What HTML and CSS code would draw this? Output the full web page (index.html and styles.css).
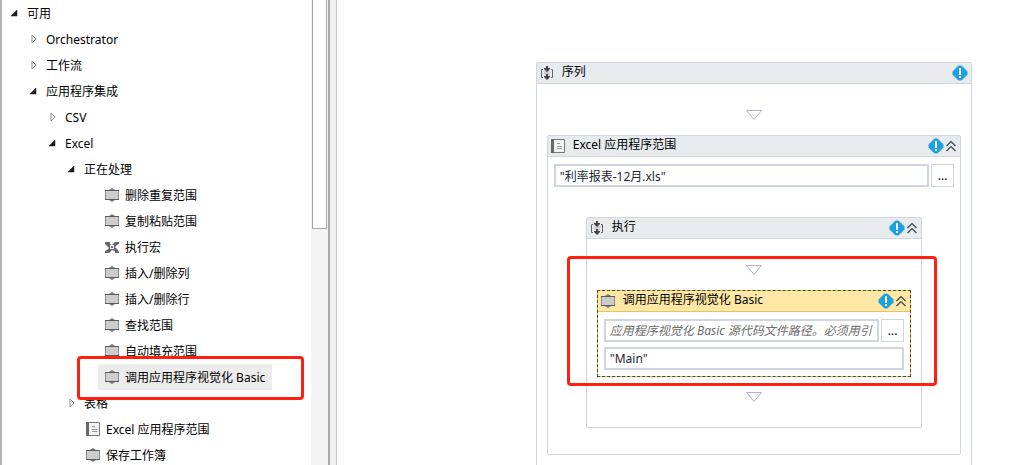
FILE: index.html
```html
<!DOCTYPE html>
<html lang="zh-CN">
<head>
  <meta charset="UTF-8" />
  <meta name="viewport" content="width=device-width, initial-scale=1.0" />
  <title>Excel</title>
  <link rel="stylesheet" href="styles.css">
</head>
<body>
  <svg class="sprite" aria-hidden="true">
    <symbol id="i-open" viewBox="0 0 8 8"><path d="M7 1v6H1z" fill="#1e1e1e" stroke="#1e1e1e" stroke-width=".5"/></symbol>
    <symbol id="i-closed" viewBox="0 0 6 10"><path d="M1 1l4 4-4 4z" fill="#fff" stroke="#8c8c8c"/></symbol>
    <symbol id="i-activity" viewBox="0 0 16 16">
      <path d="M8 1l3 2H5zM8 15l3-2H5z" fill="#777"/>
      <path d="M2 4h12v8H2z" fill="#cdcdcd"/>
      <path d="M1 3.500h14M1 12.500h14" stroke="#5c5c5c"/>
      <path d="M1.500 4v8M14.500 4v8" stroke="#8a8a8a"/>
    </symbol>
    <symbol id="i-macro" viewBox="0 0 16 16">
      <path d="M1 3h5v2l2 1 3-3h4v2l-2 1-2 2 2 2 2 3v1h-4v-2l-3-1-3 3H1v-2l2-1 2-2-2-2-2-2z" fill="#666"/>
      <path d="M6 6h4v4H6z" fill="#eee"/><path d="M7 7h2v2H7z" fill="#777"/>
    </symbol>
    <symbol id="i-book" viewBox="0 0 14 16">
      <path d="M.5 1.500h13v13H.5z" fill="#f2f2f2" stroke="#777"/>
      <path d="M0 1h3v14H0z" fill="#686868"/>
      <path d="M6 5.500h3M6 8.500h5M6 10.500h5" stroke="#999"/>
    </symbol>
    <symbol id="i-sequence" viewBox="0 0 14 16">
      <path d="M4 6h6v4H4z" fill="#cfcfcf"/>
      <path d="M3 4.500H1.500v8H3M11 4.500h1.500v8H11" fill="none" stroke="#666"/>
      <path d="M6 1h2v2h2v1L7 7 4 4V3h2zM6 9h2v2h2v1l-3 3-3-3v-1h2z" fill="#444"/>
    </symbol>
    <symbol id="i-alert" viewBox="0 0 16 16">
      <path d="M6.500 1h3L15 6.500v3L9.500 15h-3L1 9.500v-3z" fill="#1ba1e2" stroke="#1ba1e2"/>
      <path d="M7 3h2v7H7zM7 11h2v2H7z" fill="#fff"/>
    </symbol>
    <symbol id="i-up" viewBox="0 0 12 12"><path d="M1.500 6L6 1.500 10.500 6M1.500 11L6 6.500 10.500 11" fill="none" stroke="#39424f" stroke-width="1.200"/></symbol>
    <symbol id="i-drop" viewBox="0 0 18 11"><path d="M1.500.5h15L9 9.500z" fill="#fff" stroke="#adb5c7"/></symbol>
  </svg>

  <div class="app">
    <aside class="panel">
      <ul class="tree">
        <li>
          <div class="row"><button class="toggle" aria-label="可用"><svg class="open"><use href="#i-open"/></svg></button>可用</div>
          <ul>
            <li><div class="row"><button class="toggle" aria-label="Orchestrator"><svg class="closed"><use href="#i-closed"/></svg></button>Orchestrator</div></li>
            <li><div class="row"><button class="toggle" aria-label="工作流"><svg class="closed"><use href="#i-closed"/></svg></button>工作流</div></li>
            <li>
              <div class="row"><button class="toggle" aria-label="应用程序集成"><svg class="open"><use href="#i-open"/></svg></button>应用程序集成</div>
              <ul>
                <li><div class="row"><button class="toggle" aria-label="CSV"><svg class="closed"><use href="#i-closed"/></svg></button>CSV</div></li>
                <li>
                  <div class="row"><button class="toggle" aria-label="Excel"><svg class="open"><use href="#i-open"/></svg></button>Excel</div>
                  <ul>
                    <li>
                      <div class="row"><button class="toggle" aria-label="正在处理"><svg class="open"><use href="#i-open"/></svg></button>正在处理</div>
                      <ul>
                        <li class="leaf"><div class="item"><svg class="icon"><use href="#i-activity"/></svg>删除重复范围</div></li>
                        <li class="leaf"><div class="item"><svg class="icon"><use href="#i-activity"/></svg>复制粘贴范围</div></li>
                        <li class="leaf"><div class="item"><svg class="icon"><use href="#i-macro"/></svg>执行宏</div></li>
                        <li class="leaf"><div class="item"><svg class="icon"><use href="#i-activity"/></svg>插入/删除列</div></li>
                        <li class="leaf"><div class="item"><svg class="icon"><use href="#i-activity"/></svg>插入/删除行</div></li>
                        <li class="leaf"><div class="item"><svg class="icon"><use href="#i-activity"/></svg>查找范围</div></li>
                        <li class="leaf"><div class="item"><svg class="icon"><use href="#i-activity"/></svg>自动填充范围</div></li>
                        <li class="leaf"><div class="item selected"><svg class="icon"><use href="#i-activity"/></svg>调用应用程序视觉化 Basic<span class="mark mark-item"></span></div></li>
                      </ul>
                    </li>
                    <li><div class="row"><button class="toggle" aria-label="表格"><svg class="closed"><use href="#i-closed"/></svg></button>表格</div></li>
                    <li class="leaf"><div class="item"><svg class="icon"><use href="#i-book"/></svg>Excel 应用程序范围</div></li>
                    <li class="leaf"><div class="item"><svg class="icon"><use href="#i-activity"/></svg>保存工作簿</div></li>
                  </ul>
                </li>
              </ul>
            </li>
          </ul>
        </li>
      </ul>
      <div class="scrollbar"><div class="thumb"></div></div>
    </aside>
    <div class="splitter"></div>

    <main class="canvas">
      <section class="card sequence">
        <header class="card-head">
          <svg class="icon"><use href="#i-sequence"/></svg>
          <h2>序列</h2>
          <svg class="icon"><use href="#i-alert"/></svg>
        </header>
        <div class="sequence-body">
          <svg class="drop"><use href="#i-drop"/></svg>
          <section class="card scope">
            <header class="card-head">
              <svg class="icon"><use href="#i-book"/></svg>
              <h2>Excel 应用程序范围</h2>
              <svg class="icon"><use href="#i-alert"/></svg>
              <button class="collapse" aria-label="折叠"><svg><use href="#i-up"/></svg></button>
            </header>
            <div class="fields">
              <div class="field">
                <input type="text" aria-label="工作簿路径" value='"利率报表-12月.xls"' />
                <button class="browse">...</button>
              </div>
            </div>
            <section class="card do">
              <header class="card-head">
                <svg class="icon"><use href="#i-sequence"/></svg>
                <h2>执行</h2>
                <svg class="icon"><use href="#i-alert"/></svg>
                <button class="collapse" aria-label="折叠"><svg><use href="#i-up"/></svg></button>
              </header>
              <div class="do-body">
                <svg class="drop"><use href="#i-drop"/></svg>
                <section class="activity">
                  <header class="card-head">
                    <svg class="icon"><use href="#i-activity"/></svg>
                    <h2>调用应用程序视觉化 Basic</h2>
                    <svg class="icon"><use href="#i-alert"/></svg>
                    <button class="collapse" aria-label="折叠"><svg><use href="#i-up"/></svg></button>
                  </header>
                  <div class="fields">
                    <div class="field">
                      <input type="text" aria-label="源代码文件路径" placeholder="应用程序视觉化 Basic 源代码文件路径。必须用引号" />
                      <button class="browse">...</button>
                    </div>
                    <div class="field">
                      <input type="text" aria-label="入口方法名称" value='"Main"' />
                    </div>
                  </div>
                  <span class="mark mark-activity"></span>
                </section>
                <svg class="drop"><use href="#i-drop"/></svg>
              </div>
            </section>
          </section>
        </div>
      </section>
    </main>
  </div>
</body>
</html>
```
FILE: styles.css
```css
* {
  box-sizing: border-box;
}
body {
  margin: 0;
  font-family: "Noto Sans", "Noto Sans CJK SC", sans-serif;
  font-size: 12px;
  color: #000;
  background: #fff;
}
button, input {
  font: inherit;
}
svg {
  display: block;
  flex: none;
}
.sprite {
  position: absolute;
  width: 0;
  height: 0;
}
.app {
  display: flex;
  height: 100vh;
  overflow: hidden;
}

/* activities panel */
.panel {
  display: flex;
  flex: 0 0 32.2%;
  border-left: 2px solid #b4b4b4;
}
.tree {
  flex: 1;
  padding-left: 6px;
}
.tree, .tree ul {
  margin: 0;
  list-style: none;
}
.tree ul {
  padding-left: 19px;
}
.row, .item {
  display: flex;
  align-items: center;
  height: 26px;
  white-space: nowrap;
}
.toggle {
  display: flex;
  align-items: center;
  width: 19px;
  height: 20px;
  padding: 0 0 0 2px;
  border: none;
  background: none;
}
.toggle .open {
  width: 8px;
  height: 8px;
}
.toggle .closed {
  width: 6px;
  height: 10px;
  margin-left: 2px;
}
.leaf {
  display: flex;
  padding-left: 14px;
}
.item {
  gap: 5px;
  padding: 0 7px 0 6px;
}
.selected {
  position: relative;
  background: #ececec;
}
.icon {
  width: 16px;
  height: 16px;
}
.scrollbar {
  width: 17px;
  padding: 0 1px;
  background: #f3f3f3;
}
.thumb {
  height: 229px;
  border: 1px solid #a6a6a6;
  border-top: none;
  background: #fff;
}
.splitter {
  width: 9px;
  border-left: 2px solid #a8a8a8;
  border-right: 1px solid #c8c8c8;
  background: #f0f0f0;
}

/* workflow designer */
.canvas {
  flex: 1;
  min-width: 0;
  padding: 62px 4.6% 0 19.5%;
}
.card {
  border: 1px solid #cfd5e3;
  border-radius: 2px;
  background: #fff;
}
.card-head {
  display: flex;
  align-items: center;
  height: 21px;
  padding: 0 3px 0 2px;
  border-bottom: 1px solid #cfd5e3;
  background: #e7ebee;
}
.card-head h2 {
  flex: 1;
  margin: 0 0 0 7px;
  padding-bottom: 2px;
  font-size: 12px;
  line-height: 18px;
  font-weight: normal;
  white-space: nowrap;
}
.collapse {
  width: 12px;
  height: 12px;
  margin-left: 1px;
  padding: 0;
  border: none;
  background: none;
}
.collapse svg {
  width: 12px;
  height: 12px;
}
.drop {
  width: 18px;
  height: 11px;
  margin: 0 auto;
}
.sequence {
  height: 500px;
}
.sequence-body {
  padding: 26px 10px;
}
.scope {
  margin-top: 14px;
  padding-bottom: 26px;
}
.do {
  margin: 23px 38px 0;
}
.do-body {
  padding: 26px 10px 24px;
}
.fields {
  display: grid;
  grid-template-columns: minmax(0, 1fr);
  gap: 5px;
  padding: 7px 6px 6px;
  background: #fff;
}
.field {
  display: flex;
  gap: 2px;
}
.field input {
  flex: 1;
  min-width: 0;
  height: 23px;
  padding: 0 4px;
  border: 2px solid #cfd5e3;
  color: #1c2733;
  background: #fff;
}
.field input::placeholder {
  font-style: italic;
  color: #6d6d6d;
}
.browse {
  width: 23px;
  height: 23px;
  padding: 0;
  border: 1px solid #cfd5e3;
  background: #fff;
}
.scope > .fields {
  padding-bottom: 7px;
}
.activity {
  position: relative;
  margin: 14px 0 15px;
  border: 1px dashed #5c4a14;
  background: #e5c365;
}
.activity .card-head {
  border-bottom-color: #e5c365;
  background: #ffe8a6;
}

/* red highlight frames */
.mark {
  position: absolute;
  z-index: 1;
  border: 3px solid #ff2010;
  border-radius: 4px;
  pointer-events: none;
}
.mark-item {
  inset: -8px -32px -10px -21px;
}
.mark-activity {
  inset: -35px -27px -10px -31px;
}
```
